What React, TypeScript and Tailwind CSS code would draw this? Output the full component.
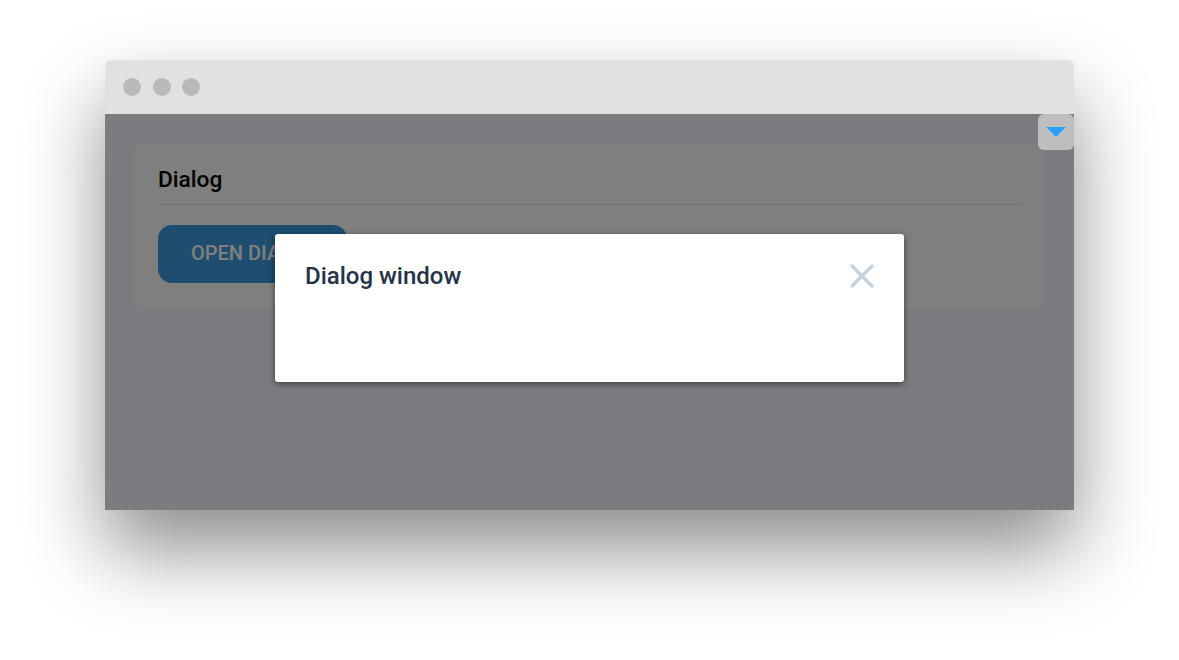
export default function App() {
  return (
    <div className="h-[660px] w-[1179px] overflow-hidden bg-white pl-[105px] pt-[60px] font-['Roboto',sans-serif]">
      <div className="w-[969px] rounded-t-md shadow-[0_40px_80px_rgba(0,0,0,0.45)]">
        <div className="flex h-[54px] items-center gap-[11.5px] rounded-t-md bg-[#e1e1e1] pl-[18px]">
          <span className="h-[18px] w-[18px] rounded-full bg-[#b9b9b9]" />
          <span className="h-[18px] w-[18px] rounded-full bg-[#b9b9b9]" />
          <span className="h-[18px] w-[18px] rounded-full bg-[#b9b9b9]" />
        </div>
        <div className="relative h-[396px] bg-[#f6f8ff] px-[30px] pt-[30px]">
          <div className="h-[163px] rounded-md bg-white pr-[22px] pl-[23px] pt-[21px]">
            <h2 className="border-b border-[#e0e0e0] pb-[9px] text-[22.7px] leading-[30px] font-medium text-black">Dialog</h2>
            <button className="mt-[20px] h-[58px] w-[189px] rounded-[14px] bg-[#3f9be0] pb-[2px] pl-[33px] text-left text-[20px] font-medium text-white uppercase">
              Open dialog
            </button>
          </div>
          <div className="absolute inset-0 bg-black/50" />
          <div className="absolute top-0 right-0 flex h-9 w-9 items-center justify-center rounded-md bg-white/50">
            <svg width="20" height="10" viewBox="0 0 20 10">
              <path d="M0 0h20L10 10z" fill="#2ba0ff" />
            </svg>
          </div>
          <div className="absolute top-[120px] left-[170px] h-[148px] w-[629px] rounded-[3px] bg-white px-[30px] pt-[26px] shadow-[0_2px_6px_rgba(0,0,0,0.5)]">
            <div className="flex items-start justify-between">
              <h3 className="text-[24px] leading-[32px] font-medium text-[#253248]">Dialog window</h3>
              <svg className="mt-[2px] mr-[-2px]" width="28" height="28" viewBox="0 0 28 28">
                <path d="M4 4l20 20M24 4L4 24" stroke="#c5d3df" strokeWidth="3.5" strokeLinecap="round" />
              </svg>
            </div>
          </div>
        </div>
      </div>
    </div>
  );
}
